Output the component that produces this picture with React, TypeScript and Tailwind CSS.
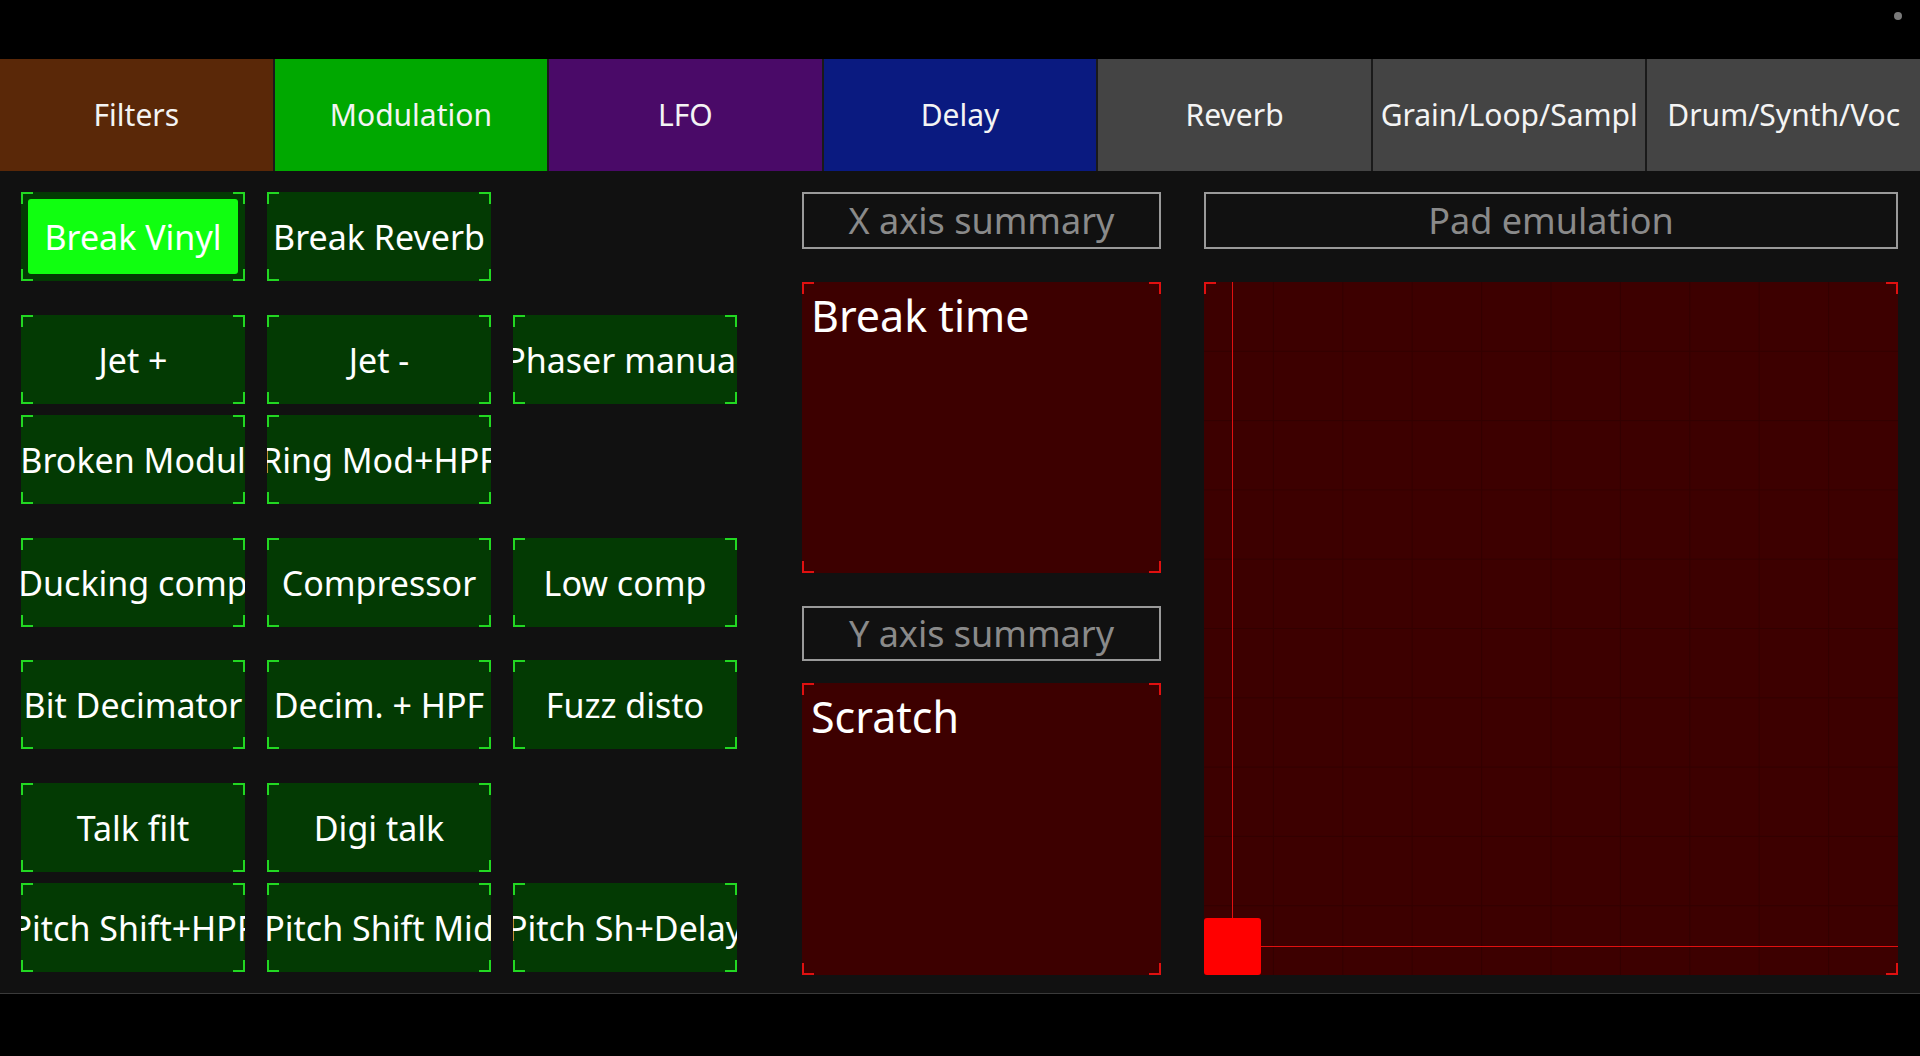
import React from "react";

const tabs = [
  { label: "Filters", cls: "bg-[#5a2808]" },
  { label: "Modulation", cls: "bg-[#00a800]" },
  { label: "LFO", cls: "bg-[#4a0a68]" },
  { label: "Delay", cls: "bg-[#0a1a80]" },
  { label: "Reverb", cls: "bg-[#444444]" },
  { label: "Grain/Loop/Sampl", cls: "bg-[#444444]" },
  { label: "Drum/Synth/Voc", cls: "bg-[#444444]" },
];

type Row = { mt: string; items: string[] };

const rows: Row[] = [
  { mt: "mt-[21px]", items: ["Break Vinyl", "Break Reverb"] },
  { mt: "mt-[34px]", items: ["Jet +", "Jet -", "Phaser manual"] },
  { mt: "mt-[11px]", items: ["Broken Modul", "Ring Mod+HPF"] },
  { mt: "mt-[34px]", items: ["Ducking comp", "Compressor", "Low comp"] },
  { mt: "mt-[33px]", items: ["Bit Decimator", "Decim. + HPF", "Fuzz disto"] },
  { mt: "mt-[34px]", items: ["Talk filt", "Digi talk"] },
  { mt: "mt-[11px]", items: ["Pitch Shift+HPF", "Pitch Shift Mid", "Pitch Sh+Delay"] },
];

function Corners({ color, hideBL }: { color: "green" | "red"; hideBL?: boolean }) {
  const c = color === "green" ? "border-[#22d822]" : "border-[#e01010]";
  return (
    <>
      <span className={`pointer-events-none absolute left-0 top-0 h-[12px] w-[12px] border-l-2 border-t-2 ${c}`} />
      <span className={`pointer-events-none absolute right-0 top-0 h-[12px] w-[12px] border-r-2 border-t-2 ${c}`} />
      {!hideBL && (
        <span className={`pointer-events-none absolute bottom-0 left-0 h-[12px] w-[12px] border-b-2 border-l-2 ${c}`} />
      )}
      <span className={`pointer-events-none absolute bottom-0 right-0 h-[12px] w-[12px] border-b-2 border-r-2 ${c}`} />
    </>
  );
}

function FxButton({ label, active }: { label: string; active?: boolean }) {
  return (
    <div className="relative h-[89px] w-[224px] bg-[#033a03]">
      {active && <div className="absolute inset-[7px] rounded-[3px] bg-[#10ff10]" />}
      <div className="absolute inset-0 flex items-center justify-center overflow-hidden whitespace-nowrap text-[34px] leading-none text-white">
        {label}
      </div>
      <Corners color="green" />
    </div>
  );
}

function HeaderBox({ label, h }: { label: string; h: string }) {
  return (
    <div className={`flex ${h} items-center justify-center border-2 border-[#9a9a9a] text-[36px] leading-none text-[#8a8a8a]`}>
      {label}
    </div>
  );
}

function Panel({ label, h }: { label: string; h: string }) {
  return (
    <div className={`relative ${h} bg-[#3d0000] pl-[9px] pt-[12px]`}>
      <div className="text-[43px] leading-none text-white">{label}</div>
      <Corners color="red" />
    </div>
  );
}

function PadGrid() {
  const lines = [];
  for (let i = 1; i < 10; i++) {
    const p = (i * 100) / 10;
    lines.push(<line key={"v" + i} x1={`${p}%`} y1="0" x2={`${p}%`} y2="100%" stroke="#330000" strokeWidth="1" />);
    lines.push(<line key={"h" + i} x1="0" y1={`${p}%`} x2="100%" y2={`${p}%`} stroke="#330000" strokeWidth="1" />);
  }
  return (
    <svg className="absolute inset-0 h-full w-full" xmlns="http://www.w3.org/2000/svg">
      {lines}
    </svg>
  );
}

export default function App() {
  return (
    <div className="relative h-[1056px] w-[1920px] overflow-hidden bg-black font-['Noto_Sans',sans-serif]">
      <div className="absolute right-[18px] top-[12px] h-[8px] w-[8px] rounded-full bg-[#7a7a7a]" />
      <div className="h-[59px]" />
      <div className="flex h-[112px] gap-[2px] bg-[#1a1a1a]">
        {tabs.map((t) => (
          <div
            key={t.label}
            className={`flex flex-1 items-center justify-center overflow-hidden whitespace-nowrap text-[30px] leading-none text-[#f4f4f4] ${t.cls}`}
          >
            {t.label}
          </div>
        ))}
      </div>
      <div className="flex h-[823px] border-b border-[#3a3a3a] bg-[#111111] pl-[21px]">
        <div className="flex w-[716px] flex-col">
          {rows.map((r, ri) => (
            <div key={ri} className={`flex gap-[22px] ${r.mt}`}>
              {r.items.map((it) => (
                <FxButton key={it} label={it} active={it === "Break Vinyl"} />
              ))}
            </div>
          ))}
        </div>
        <div className="ml-[65px] flex w-[359px] flex-col pt-[21px]">
          <HeaderBox label="X axis summary" h="h-[57px]" />
          <div className="mt-[33px]">
            <Panel label="Break time" h="h-[291px]" />
          </div>
          <div className="mt-[33px]">
            <HeaderBox label="Y axis summary" h="h-[55px]" />
          </div>
          <div className="mt-[22px]">
            <Panel label="Scratch" h="h-[292px]" />
          </div>
        </div>
        <div className="ml-[43px] flex w-[694px] flex-col pt-[21px]">
          <HeaderBox label="Pad emulation" h="h-[57px]" />
          <div className="relative mt-[33px] h-[693px] bg-[#3d0000]">
            <PadGrid />
            <div className="absolute left-[28px] top-0 h-[636px] w-px bg-[#e01010]" />
            <div className="absolute left-[57px] right-0 top-[664px] h-px bg-[#e01010]" />
            <div className="absolute bottom-0 left-0 h-[57px] w-[57px] rounded-[3px] bg-[#ff0000]" />
            <Corners color="red" hideBL />
          </div>
        </div>
      </div>
    </div>
  );
}
